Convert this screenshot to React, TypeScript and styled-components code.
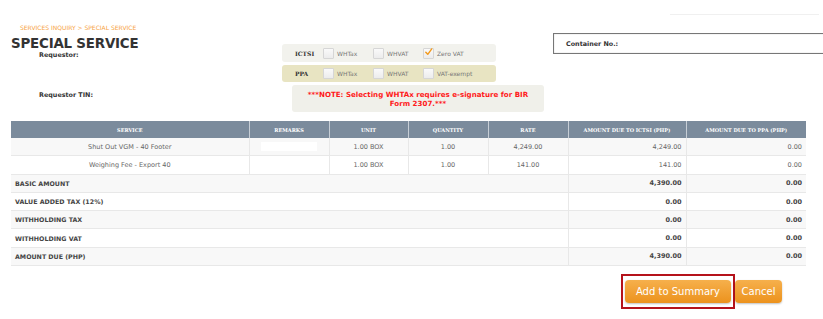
import React from 'react';
import styled, { createGlobalStyle } from 'styled-components';

const GlobalStyle = createGlobalStyle`
  html, body {
    margin: 0;
    padding: 0;
    background: #ffffff;
    font-family: 'DejaVu Sans', Verdana, sans-serif;
    color: #333;
  }
`;

type Line = {
  service: string;
  remarks: boolean;
  unit: string;
  quantity: string;
  rate: string;
  ictsi: string;
  ppa: string;
};

const lines: Line[] = [
  { service: 'Shut Out VGM - 40 Footer', remarks: true, unit: '1.00 BOX', quantity: '1.00', rate: '4,249.00', ictsi: '4,249.00', ppa: '0.00' },
  { service: 'Weighing Fee - Export 40', remarks: false, unit: '1.00 BOX', quantity: '1.00', rate: '141.00', ictsi: '141.00', ppa: '0.00' },
];

const totals = [
  { label: 'BASIC AMOUNT', ictsi: '4,390.00', ppa: '0.00' },
  { label: 'VALUE ADDED TAX (12%)', ictsi: '0.00', ppa: '0.00' },
  { label: 'WITHHOLDING TAX', ictsi: '0.00', ppa: '0.00' },
  { label: 'WITHHOLDING VAT', ictsi: '0.00', ppa: '0.00' },
  { label: 'AMOUNT DUE (PHP)', ictsi: '4,390.00', ppa: '0.00' },
];

const Check: React.FC<{ checked?: boolean; label: string }> = ({ checked, label }) => (
  <CheckItem>
    <CheckBox>
      {checked && (
        <svg width="10" height="10" viewBox="0 0 10 10">
          <path d="M2 5.2 L4.2 7.6 L8.6 1.6" fill="none" stroke="#f29a1d" strokeWidth="1.6" strokeLinecap="round" strokeLinejoin="round" />
        </svg>
      )}
    </CheckBox>
    <CheckLabel>{label}</CheckLabel>
  </CheckItem>
);

const App: React.FC = () => (
  <Page>
    <GlobalStyle />
    <TopRule />
    <Header>
      <LeftCol>
        <Breadcrumb>SERVICES INQUIRY &gt; SPECIAL SERVICE</Breadcrumb>
        <Title>SPECIAL SERVICE</Title>
        <FieldLabel $gap={-1}>Requestor:</FieldLabel>
        <FieldLabel $gap={32}>Requestor TIN:</FieldLabel>
      </LeftCol>
      <MiddleCol>
        <TaxRow $tone="plain">
          <TaxName>ICTSI</TaxName>
          <Check label="WHTax" />
          <Check label="WHVAT" />
          <Check checked label="Zero VAT" />
        </TaxRow>
        <TaxRow $tone="khaki">
          <TaxName>PPA</TaxName>
          <Check label="WHTax" />
          <Check label="WHVAT" />
          <Check label="VAT-exempt" />
        </TaxRow>
        <Note>***NOTE: Selecting WHTAx requires e-signature for BIR Form 2307.***</Note>
      </MiddleCol>
      <RightCol>
        <ContainerBox>Container No.:</ContainerBox>
      </RightCol>
    </Header>

    <Table>
      <colgroup>
        <col style={{ width: 238 }} />
        <col style={{ width: 80 }} />
        <col style={{ width: 79 }} />
        <col style={{ width: 80 }} />
        <col style={{ width: 80 }} />
        <col style={{ width: 118 }} />
        <col style={{ width: 120 }} />
      </colgroup>
      <thead>
        <tr>
          <Th>SERVICE</Th>
          <Th>REMARKS</Th>
          <Th>UNIT</Th>
          <Th>QUANTITY</Th>
          <Th>RATE</Th>
          <Th>AMOUNT DUE TO ICTSI (PHP)</Th>
          <Th>AMOUNT DUE TO PPA (PHP)</Th>
        </tr>
      </thead>
      <tbody>
        {lines.map((l, i) => (
          <Row key={l.service} $shaded={i % 2 === 0}>
            <Td $align="center">{l.service}</Td>
            <Td $align="center">{l.remarks && <RemarksInput />}</Td>
            <Td $align="center">{l.unit}</Td>
            <Td $align="center">{l.quantity}</Td>
            <Td $align="center">{l.rate}</Td>
            <Td $align="right">{l.ictsi}</Td>
            <Td $align="right">{l.ppa}</Td>
          </Row>
        ))}
        {totals.map((t, i) => (
          <Row key={t.label} $shaded={i % 2 === 0}>
            <TotalLabel colSpan={5}>{t.label}</TotalLabel>
            <Td $align="right" $bold>{t.ictsi}</Td>
            <Td $align="right" $bold>{t.ppa}</Td>
          </Row>
        ))}
      </tbody>
    </Table>

    <Actions>
      <Highlight>
        <OrangeButton>Add to Summary</OrangeButton>
      </Highlight>
      <OrangeButton $small>Cancel</OrangeButton>
    </Actions>
  </Page>
);

const Page = styled.div`
  position: relative;
  width: 823px;
  height: 319px;
  overflow: hidden;
  padding: 0 0 0 11px;
  box-sizing: border-box;
`;

const TopRule = styled.div`
  position: absolute;
  top: 14px;
  left: 670px;
  width: 149px;
  height: 1px;
  background: #f0f0f0;
`;

const Header = styled.div`
  display: flex;
  height: 121px;
`;

const LeftCol = styled.div`
  flex: 0 0 271px;
  padding-top: 24px;
`;

const Breadcrumb = styled.div`
  margin-left: 9px;
  font-size: 6px;
  line-height: 8px;
  color: #f7a33f;
`;

const Title = styled.h1`
  margin: 4px 0 0;
  font-size: 13.4px;
  line-height: 16px;
  font-weight: bold;
  color: #333;
  letter-spacing: -0.2px;
`;

const FieldLabel = styled.div<{ $gap: number }>`
  margin: ${(p) => p.$gap}px 0 0 28px;
  font-size: 6.4px;
  line-height: 8px;
  font-weight: bold;
  color: #333;
`;

const MiddleCol = styled.div`
  flex: 0 0 271px;
  padding-top: 44px;
  display: flex;
  flex-direction: column;
  gap: 3px;
`;

const TaxRow = styled.div<{ $tone: 'plain' | 'khaki' }>`
  width: 214px;
  height: ${(p) => (p.$tone === 'plain' ? 18 : 17)}px;
  box-sizing: border-box;
  padding-left: 13px;
  display: flex;
  align-items: center;
  border-radius: 3px;
  background: ${(p) => (p.$tone === 'plain' ? '#f2f2ed' : '#e8e4c2')};
`;

const TaxName = styled.span`
  width: 28px;
  font-family: 'DejaVu Serif', 'Liberation Serif', serif;
  font-weight: bold;
  font-size: 6px;
  color: #333;
`;

const CheckItem = styled.span`
  width: 50px;
  display: flex;
  align-items: center;
  gap: 3px;
`;

const CheckBox = styled.span`
  width: 9px;
  height: 9px;
  border: 1px solid #d6d6d6;
  border-radius: 1px;
  background: linear-gradient(#fafafa, #ececec);
  display: flex;
  align-items: center;
  justify-content: center;
  svg {
    margin-top: -2px;
  }
`;

const CheckLabel = styled.span`
  font-size: 6px;
  color: #777;
`;

const Note = styled.div`
  margin-left: 10px;
  width: 252px;
  height: 27px;
  box-sizing: border-box;
  padding: 0 10px;
  border-radius: 3px;
  background: #f0f0ea;
  color: #ff1a1a;
  font-weight: bold;
  font-size: 7.1px;
  line-height: 9px;
  text-align: center;
  display: flex;
  align-items: center;
  justify-content: center;
`;

const RightCol = styled.div`
  flex: 1 1 auto;
  min-width: 0;
  padding-top: 33px;
`;

const ContainerBox = styled.div`
  width: 290px;
  height: 21px;
  box-sizing: border-box;
  padding-left: 12px;
  display: flex;
  align-items: center;
  border: 1px solid #777;
  box-shadow: inset 0 0 1px #999;
  font-size: 6.4px;
  font-weight: bold;
  color: #333;
`;

const Table = styled.table`
  width: 795px;
  border-collapse: collapse;
  table-layout: fixed;
`;

const Th = styled.th`
  height: 17px;
  padding: 0 4px;
  background: #7b8b9c;
  color: #fff;
  font-family: 'DejaVu Serif', 'Liberation Serif', serif;
  font-size: 5px;
  font-weight: bold;
  text-align: center;
  border-right: 1px solid #c7ced6;
  &:last-child {
    border-right: none;
  }
`;

const Row = styled.tr<{ $shaded: boolean }>`
  background: ${(p) => (p.$shaded ? '#f8f8f8' : '#ffffff')};
  border-bottom: 1px solid #e8e8e8;
`;

const Td = styled.td<{ $align: 'center' | 'right'; $bold?: boolean }>`
  height: 17.3px;
  padding: 0 4px;
  font-size: 6.5px;
  color: ${(p) => (p.$bold ? '#444' : '#666')};
  font-weight: ${(p) => (p.$bold ? 'bold' : 'normal')};
  text-align: ${(p) => p.$align};
  border-right: 1px solid #e8e8e8;
  &:last-child {
    border-right: none;
  }
`;

const TotalLabel = styled.td`
  height: 17.3px;
  padding: 0 4px;
  font-size: 6.3px;
  font-weight: bold;
  color: #444;
  border-right: 1px solid #e8e8e8;
`;

const RemarksInput = styled.span`
  display: block;
  margin: 0 auto;
  width: 56px;
  height: 9px;
  background: #fff;
`;

const Actions = styled.div`
  display: flex;
  align-items: center;
  margin: 8px 0 0 610px;
`;

const Highlight = styled.div`
  padding: 4px 2px;
  border: 2px solid #b5121b;
`;

const OrangeButton = styled.button<{ $small?: boolean }>`
  width: ${(p) => (p.$small ? 47 : 106)}px;
  height: 23px;
  border: none;
  border-radius: 4px;
  background: linear-gradient(#f6b04c, #ec921d);
  box-shadow: 0 1px 2px rgba(0, 0, 0, 0.25);
  color: #fff;
  font-family: 'DejaVu Sans', Verdana, sans-serif;
  font-size: 10px;
  padding: 0;
`;

export default App;
